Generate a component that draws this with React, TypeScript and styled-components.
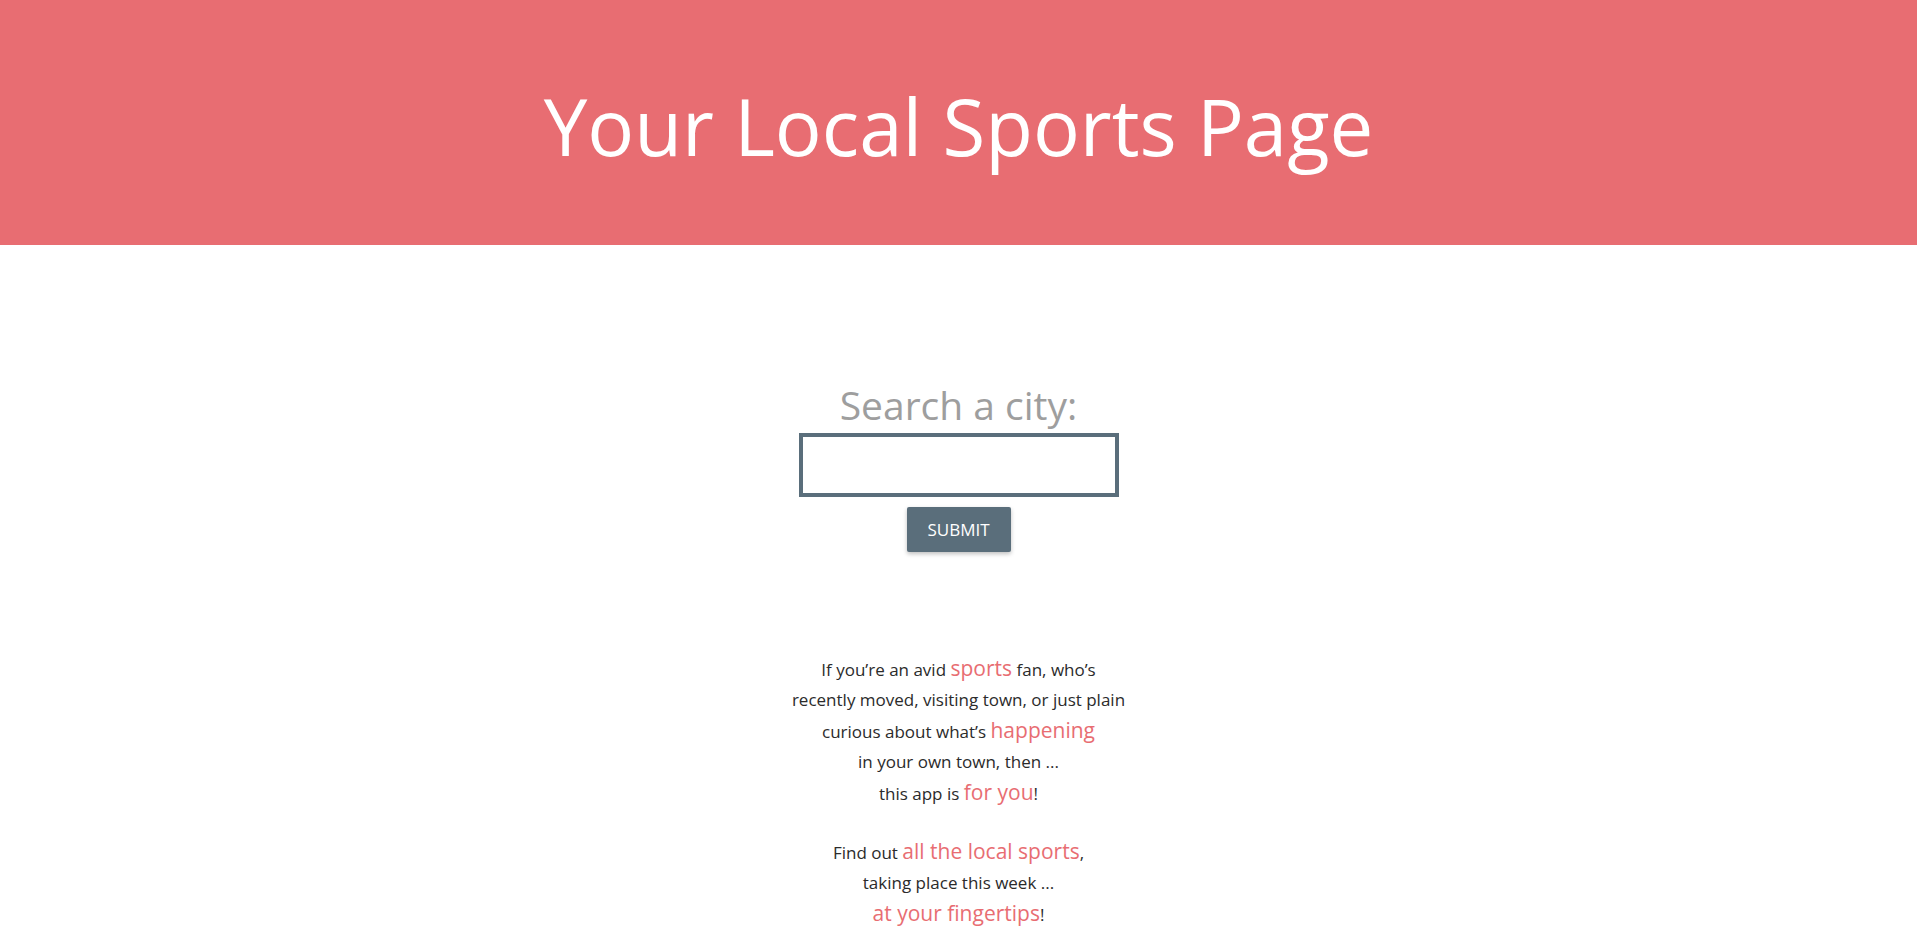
import React from "react";
import styled, { createGlobalStyle } from "styled-components";

const Global = createGlobalStyle`
  html, body { margin: 0; padding: 0; background: #fff; }
  body { font-family: "Open Sans", "Noto Sans", sans-serif; color: #333; }
  * { box-sizing: border-box; }
`;

const PINK = "#e86d72";

const Header = styled.header`
  background: ${PINK};
  height: 245px;
  display: flex;
  align-items: center;
  justify-content: center;
`;

const Title = styled.h1`
  margin: 0;
  padding-top: 6px;
  color: #fff;
  font-weight: 400;
  font-size: 78px;
`;

const Main = styled.main`
  display: flex;
  flex-direction: column;
  align-items: center;
  padding-top: 134px;
`;

const SearchForm = styled.form`
  display: flex;
  flex-direction: column;
  align-items: center;
`;

const Label = styled.label`
  color: #9e9e9e;
  font-size: 39px;
  line-height: 52px;
`;

const Input = styled.input`
  width: 320px;
  height: 64px;
  border: 4px solid #5a6e7b;
  outline: none;
  font-size: 20px;
  padding: 0 10px;
  margin-top: 2px;
`;

const Button = styled.button`
  margin-top: 10px;
  width: 104px;
  height: 45px;
  background: #5a6e7b;
  color: #fff;
  border: none;
  border-radius: 2px;
  font-family: inherit;
  font-size: 17px;
  text-transform: uppercase;
  box-shadow: 0 2px 4px rgba(0,0,0,0.25);
  cursor: pointer;
`;

const Blurb = styled.div`
  margin-top: 101px;
  text-align: center;
  font-size: 17px;
  line-height: 30px;
  color: #2b2b2b;
`;

const Para = styled.p`
  margin: 0 0 27px;
`;

const Hi = styled.span`
  color: ${PINK};
  font-size: 21px;
`;

export default function App() {
  return (
    <>
      <Global />
      <Header>
        <Title>Your Local Sports Page</Title>
      </Header>
      <Main>
        <SearchForm onSubmit={(e) => e.preventDefault()}>
          <Label htmlFor="city">Search a city:</Label>
          <Input id="city" type="text" />
          <Button type="submit">Submit</Button>
        </SearchForm>
        <Blurb>
          <Para>
            If you’re an avid <Hi>sports</Hi> fan, who’s
            <br />
            recently moved, visiting town, or just plain
            <br />
            curious about what’s <Hi>happening</Hi>
            <br />
            in your own town, then ...
            <br />
            this app is <Hi>for you</Hi>!
          </Para>
          <Para>
            Find out <Hi>all the local sports</Hi>,
            <br />
            taking place this week ...
            <br />
            <Hi>at your fingertips</Hi>!
          </Para>
        </Blurb>
      </Main>
    </>
  );
}
